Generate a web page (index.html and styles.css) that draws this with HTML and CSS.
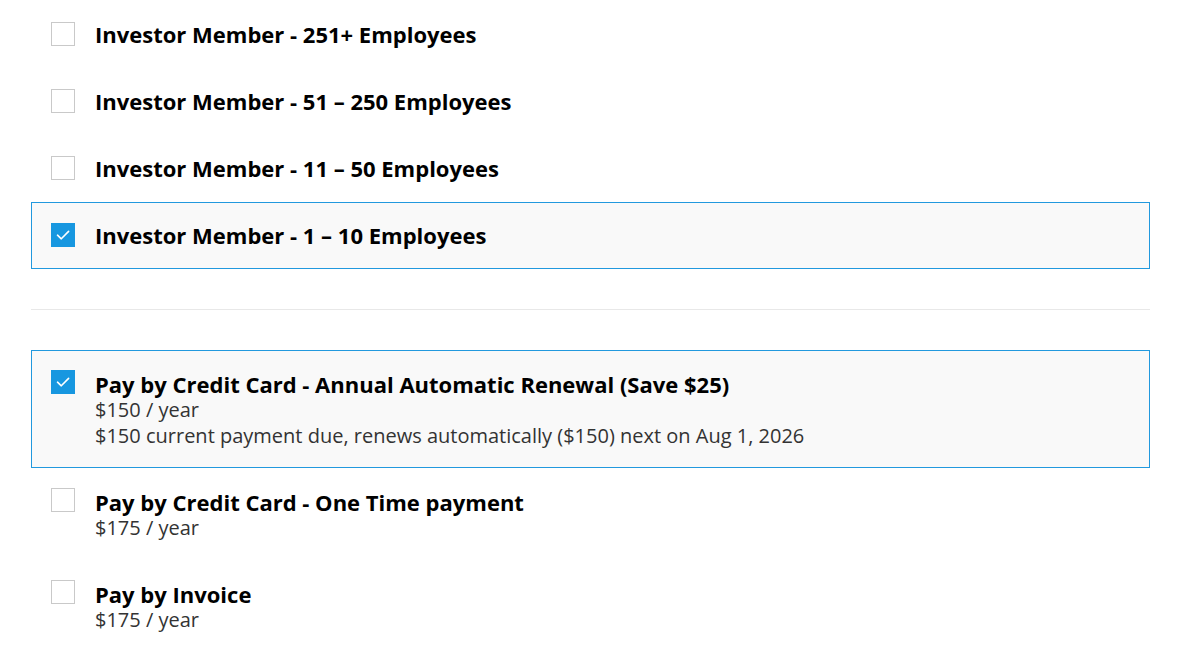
FILE: index.html
```html
<!DOCTYPE html>
<html>
<head>
<meta charset="utf-8">
<link rel="stylesheet" href="styles.css">
</head>
<body>
<div class="page">
  <div class="group members">
    <div class="option">
      <span class="check"></span>
      <div class="text"><div class="title">Investor Member - 251+ Employees</div></div>
    </div>
    <div class="option">
      <span class="check"></span>
      <div class="text"><div class="title">Investor Member - 51 – 250 Employees</div></div>
    </div>
    <div class="option">
      <span class="check"></span>
      <div class="text"><div class="title">Investor Member - 11 – 50 Employees</div></div>
    </div>
    <div class="option selected">
      <span class="check on"><svg viewBox="0 0 24 24" width="24" height="24"><path d="M6.5 12.2 L10.3 15.8 L17.6 8.4" fill="none" stroke="#fff" stroke-width="1.6" stroke-linecap="round" stroke-linejoin="round"/></svg></span>
      <div class="text"><div class="title">Investor Member - 1 – 10 Employees</div></div>
    </div>
  </div>
  <hr class="divider">
  <div class="group payments">
    <div class="option selected">
      <span class="check on"><svg viewBox="0 0 24 24" width="24" height="24"><path d="M6.5 12.2 L10.3 15.8 L17.6 8.4" fill="none" stroke="#fff" stroke-width="1.6" stroke-linecap="round" stroke-linejoin="round"/></svg></span>
      <div class="text">
        <div class="title">Pay by Credit Card - Annual Automatic Renewal (Save $25)</div>
        <div class="sub">$150 / year</div>
        <div class="sub">$150 current payment due, renews automatically ($150) next on Aug 1, 2026</div>
      </div>
    </div>
    <div class="option">
      <span class="check"></span>
      <div class="text">
        <div class="title">Pay by Credit Card - One Time payment</div>
        <div class="sub">$175 / year</div>
      </div>
    </div>
    <div class="option">
      <span class="check"></span>
      <div class="text">
        <div class="title">Pay by Invoice</div>
        <div class="sub">$175 / year</div>
      </div>
    </div>
  </div>
</div>
</body>
</html>
```

FILE: styles.css
```css
html, body {
  margin: 0;
  padding: 0;
  background: #fff;
}
body {
  font-family: "Open Sans", "Liberation Sans", sans-serif;
}
.page {
  width: 1119px;
  margin-left: 31px;
  padding-top: 1px;
}
.group {
  display: flex;
  flex-direction: column;
}
.option {
  display: flex;
  align-items: flex-start;
  gap: 20px;
  border: 1px solid transparent;
  padding: 19px;
}
.members .option {
  padding-bottom: 20px;
}
.members .check {
  margin-top: 1px;
}
.payments .option {
  padding-bottom: 18px;
}
.payments .text {
  padding-top: 1px;
}
.option.selected {
  background: #f9f9f9;
  border-color: #2299de;
}
.check {
  flex: none;
  width: 24px;
  height: 24px;
  box-sizing: border-box;
  border: 1px solid #c9c9c9;
  background: #fff;
  display: block;
}
.check.on {
  border: none;
  background: #1797e0;
}
.check svg {
  display: block;
}
.text {
  display: flex;
  flex-direction: column;
}
.title {
  font-weight: 700;
  font-size: 22px;
  line-height: 26px;
  color: #000;
}
.sub {
  font-size: 20px;
  line-height: 26px;
  color: #333;
}
.divider {
  border: none;
  border-top: 1px solid #e8e8e8;
  margin: 40px 0 40px;
  height: 0;
}
```
